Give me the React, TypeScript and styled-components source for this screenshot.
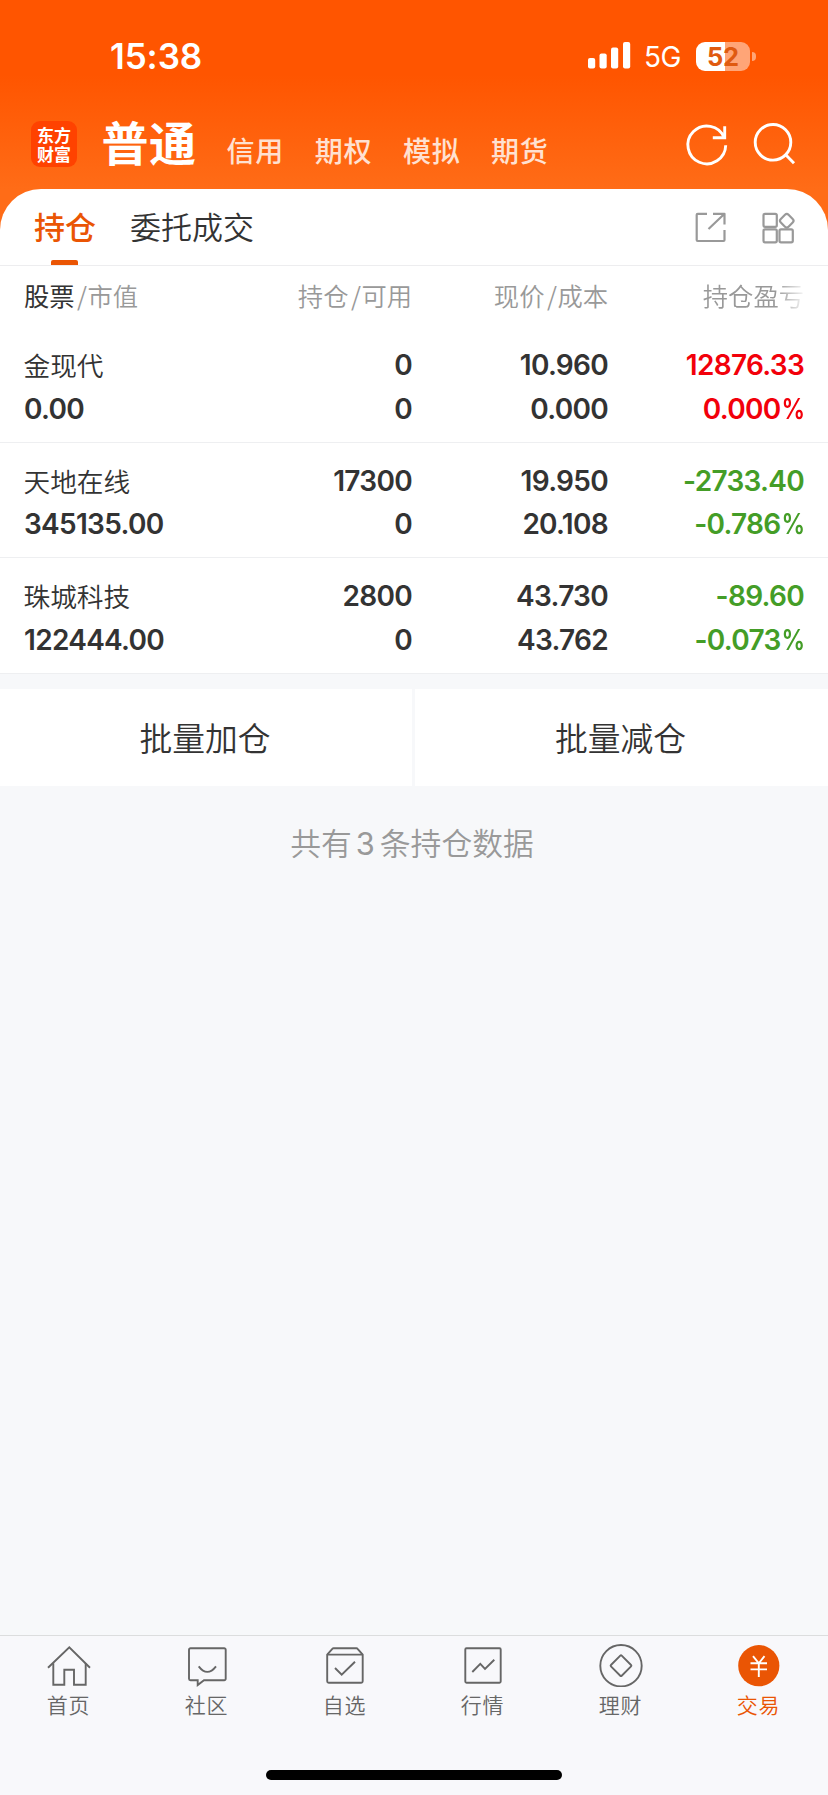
import React from "react";
import styled, { createGlobalStyle } from "styled-components";

const cjk = `"Noto Sans CJK SC", sans-serif`;
const latin = `Inter, "Noto Sans CJK SC", sans-serif`;
const accent = "#ea5504";

const GlobalStyle = createGlobalStyle`
  * { box-sizing: border-box; }
  body { margin: 0; background: #f7f8fa; font-family: ${cjk}; color: #333; }
`;

const Screen = styled.div`
  width: 828px;
  height: 1795px;
  display: flex;
  flex-direction: column;
  overflow: hidden;
  background: #f7f8fa;
`;

const Hero = styled.header`
  height: 189px;
  flex: none;
  background: linear-gradient(#ff5500 0, #ff5500 75px, #ff6c17 189px);
`;

const StatusBar = styled.div`
  height: 112px;
  padding: 0 72px 0 110px;
  display: flex;
  align-items: center;
  justify-content: space-between;
  color: #fff;
  font-family: ${latin};
`;

const Clock = styled.div`
  font-size: 35px;
  font-weight: 600;
  line-height: 40px;
  letter-spacing: -0.1px;
`;

const StatusIcons = styled.div`
  display: flex;
  align-items: center;
  svg { display: block; }
`;

const Network = styled.span`
  width: 65px;
  padding: 2px 0 0 13px;
  font-size: 28px;
  line-height: 32px;
  letter-spacing: -0.5px;
`;

const Battery = styled.div`
  width: 54px;
  height: 29px;
  border-radius: 9px;
  background: linear-gradient(90deg, #fff 28.5px, #ffa577 28.5px);
  color: #e05a10;
  font-size: 25.5px;
  font-weight: 700;
  line-height: 29px;
  text-align: center;
  letter-spacing: -0.3px;
`;

const BatteryTip = styled.div`
  width: 4px;
  height: 9px;
  margin-left: 2px;
  border-radius: 0 4px 4px 0;
  background: #ffa577;
`;

const AccountBar = styled.nav`
  height: 77px;
  padding: 0 29px 0 31px;
  display: flex;
  align-items: flex-start;
`;

const Logo = styled.div`
  width: 46px;
  height: 46px;
  margin-top: 9px;
  padding-top: 4px;
  border-radius: 9px;
  background: #ff4200;
  color: #fff;
  font: 700 17px/19px ${cjk};
  text-align: center;
`;

const AccountCurrent = styled.div`
  width: 95px;
  margin: -1px 30px 0 24.5px;
  font-size: 47px;
  line-height: 60px;
  letter-spacing: 0.5px;
  font-weight: 700;
  color: #fff;
  white-space: nowrap;
`;

const AccountLink = styled.div`
  width: 88.2px;
  margin-top: 18px;
  font-size: 28px;
  line-height: 40px;
  letter-spacing: 0.8px;
  font-weight: 500;
  color: #ffe1d1;
`;

const AccountActions = styled.div`
  display: flex;
  gap: 20px;
  margin: 8px 0 0 auto;
`;

const Sheet = styled.main`
  flex: none;
  background: linear-gradient(#ff6c17, #ff6c17 45px, #fff 45px);
`;

const SheetTabs = styled.div`
  height: 77px;
  padding: 0 34px;
  display: flex;
  border-radius: 41px 41px 0 0;
  border-bottom: 1px solid #ededef;
  background: #fff;
`;

const SheetTab = styled.div<{ $active?: boolean }>`
  position: relative;
  margin-right: 34px;
  font-size: 31px;
  line-height: 73px;
  font-weight: ${(p) => (p.$active ? 500 : 350)};
  color: ${(p) => (p.$active ? accent : "#333")};
  &::after {
    content: "";
    display: ${(p) => (p.$active ? "block" : "none")};
    position: absolute;
    left: 17px;
    bottom: 0;
    width: 27px;
    height: 5px;
    border-radius: 2px 2px 0 0;
    background: ${accent};
  }
`;

const SheetActions = styled.div`
  display: flex;
  gap: 34px;
  margin: 21px -1px 0 auto;
`;

const gridColumns = "224px 164px 196px 196px";

const HeadRow = styled.div`
  height: 61px;
  padding: 0 24px;
  display: grid;
  grid-template-columns: ${gridColumns};
  font-size: 25.3px;
  font-weight: 350;
  line-height: 59px;
  color: #999;
  background: #fff;
`;

const HeadCell = styled.div<{ $left?: boolean; $fade?: boolean }>`
  text-align: ${(p) => (p.$left ? "left" : "right")};
  white-space: nowrap;
  ${(p) => p.$fade && "mask-image: linear-gradient(90deg, #000 168px, rgba(0,0,0,.1) 196px);"}
  b { font-weight: 400; color: #333; }
  i { font-style: normal; margin: 0 0.5px 0 2.5px; }
`;

const Row = styled.div`
  height: 115.7px;
  padding: 17px 24px 0;
  display: grid;
  grid-template-columns: ${gridColumns};
  grid-template-rows: 43.6px 43.6px;
  background: #fff;
  border-bottom: 1px solid #eeeff1;
`;

const Name = styled.div`
  margin-left: -0.5px;
  font-size: 26.7px;
  font-weight: 350;
  line-height: 42px;
`;

const tones = { plain: "#333", up: "#f2000a", down: "#449d27" };

const Figure = styled.div<{ $tone?: keyof typeof tones; $left?: boolean }>`
  font-family: ${latin};
  font-size: 28px;
  font-weight: 600;
  line-height: 43.5px;
  letter-spacing: -0.7px;
  font-feature-settings: "calt" 0;
  text-align: ${(p) => (p.$left ? "left" : "right")};
  color: ${(p) => tones[p.$tone ?? "plain"]};
`;

const Percent = styled.span`
  display: inline-block;
  margin-left: -4px;
  font-weight: 600;
  transform: scaleX(0.84);
  transform-origin: right;
`;

const BatchBar = styled.div`
  flex: none;
  height: 97px;
  margin-top: 15px;
  display: grid;
  grid-template-columns: 412px 413px;
  gap: 3px;
`;

const BatchButton = styled.button`
  border: 0;
  padding: 0 2px 0 0;
  background: #fff;
  color: #333;
  font: 350 32.8px/95px ${cjk};
  display: flex;
  justify-content: center;
`;

const Summary = styled.p`
  flex: 1;
  margin: 33px 0 0;
  padding-right: 4px;
  text-align: center;
  font-size: 30.8px;
  font-weight: 350;
  line-height: 46px;
  color: #999;
  span { font-family: ${latin}; margin: 0 5px 0 4px; font-weight: 400; }
`;

const TabBar = styled.nav`
  flex: none;
  height: 160px;
  border-top: 1px solid #dcddde;
  background: #f8f8fb;
`;

const TabList = styled.div`
  display: grid;
  grid-template-columns: repeat(6, 1fr);
  height: 134px;
`;

const TabItem = styled.div<{ $active?: boolean }>`
  display: flex;
  flex-direction: column;
  align-items: center;
  padding-top: 7px;
  font-size: 21px;
  font-weight: 350;
  line-height: 30px;
  letter-spacing: 0.7px;
  color: ${(p) => (p.$active ? accent : "#666")};
  svg { display: block; margin-bottom: 2px; }
  span { margin-right: 1px; }
`;

const HomeIndicator = styled.div`
  width: 296px;
  height: 10px;
  margin: 0 auto;
  border-radius: 5px;
  background: #000;
`;

const SignalIcon = () => (
  <svg width="43" height="28" viewBox="0 0 43 28" fill="#fff">
    <rect x="0" y="16" width="7.2" height="10.5" rx="2" />
    <rect x="11.5" y="11.5" width="7.2" height="15" rx="2" />
    <rect x="23" y="5.5" width="7.2" height="21" rx="2" />
    <rect x="35" y="0" width="7.2" height="26.5" rx="2" />
  </svg>
);

const RefreshIcon = () => (
  <svg width="48" height="48" viewBox="0 0 48 48" fill="none" stroke="#fff" strokeWidth="2.9">
    <path d="M42.7 25.3A18.9 18.9 0 1 1 41.2 17.5" />
    <path d="M41.7 6.3V17.7H29.8" />
  </svg>
);

const SearchIcon = () => (
  <svg width="48" height="48" viewBox="0 0 48 48" fill="none" stroke="#fff" strokeWidth="2.9">
    <circle cx="22" cy="22.3" r="17.8" />
    <path d="M34.5 34.5L43 43.2" />
  </svg>
);

const OpenIcon = () => (
  <svg width="34" height="34" viewBox="0 0 34 34" fill="none" stroke="#999" strokeWidth="2.2" strokeLinejoin="round">
    <path d="M14 3.8H4.7a1 1 0 0 0-1 1V30a1 1 0 0 0 1 1H30.5a1 1 0 0 0 1-1V20" />
    <path d="M20 3.8H31.5V14.5M31.5 3.8L15.5 19" />
  </svg>
);

const AppsIcon = () => (
  <svg width="34" height="34" viewBox="0 0 34 34" fill="none" stroke="#999" strokeWidth="2.2">
    <rect x="2.5" y="3.8" width="13.3" height="13" rx="1.5" />
    <rect x="2.5" y="19.3" width="13.3" height="13" rx="1.5" />
    <rect x="18.5" y="19.3" width="13.3" height="13" rx="1.5" />
    <rect x="20.3" y="5.3" width="10.9" height="10.9" rx="2.5" transform="rotate(45 25.75 10.75)" />
  </svg>
);

const tabIcons = {
  home: (
    <>
      <path d="M1 24.7L22.3 4.3L43 24.7" />
      <path d="M6.3 20.3V41.7H17.3V26.7H27V41.7H38.7V20.3" />
    </>
  ),
  community: (
    <>
      <path d="M5.5 5.3H39.2a1.5 1.5 0 0 1 1.5 1.5V35.8a1.5 1.5 0 0 1-1.5 1.5H19L12.7 42.1V37.3H5.5a1.5 1.5 0 0 1-1.5-1.5V6.8a1.5 1.5 0 0 1 1.5-1.5Z" />
      <path d="M13.7 23.3Q22.3 34.5 31 23.3" />
    </>
  ),
  watchlist: (
    <>
      <path d="M4.2 11.6V38.2a1.5 1.5 0 0 0 1.5 1.5H38.2a1.5 1.5 0 0 0 1.5-1.5V11.6L34.6 5.8Q34.2 5.3 33.5 5.3H10.5Q9.8 5.3 9.3 5.8Z" />
      <path d="M4.2 11.6H39.7M12 25L18.7 31.7L32 18.7" />
    </>
  ),
  market: (
    <>
      <rect x="4.3" y="5.3" width="35.4" height="34.4" rx="1.2" />
      <path d="M11.3 29L19.3 20.9L24 25.9L33.3 16.7" />
    </>
  ),
  wealth: (
    <>
      <circle cx="22" cy="22.7" r="20.7" />
      <rect x="14.4" y="15.1" width="15.2" height="15.2" rx="1" transform="rotate(45 22 22.7)" />
    </>
  ),
  trade: (
    <>
      <circle cx="21.8" cy="22.7" r="20.6" fill={accent} stroke="none" />
      <path stroke="#fff" d="M16 13.2L21.8 20.3L27.5 13.2M21.8 20.3V34M13.5 20.3H30M13.5 26.4H30" />
    </>
  ),
};

const tabs: { icon: keyof typeof tabIcons; label: string }[] = [
  { icon: "home", label: "首页" },
  { icon: "community", label: "社区" },
  { icon: "watchlist", label: "自选" },
  { icon: "market", label: "行情" },
  { icon: "wealth", label: "理财" },
  { icon: "trade", label: "交易" },
];

const holdings: {
  name: string; value: string; held: string; usable: string;
  price: string; cost: string; profit: string; rate: string; tone: "up" | "down";
}[] = [
  { name: "金现代", value: "0.00", held: "0", usable: "0", price: "10.960", cost: "0.000", profit: "12876.33", rate: "0.000", tone: "up" },
  { name: "天地在线", value: "345135.00", held: "17300", usable: "0", price: "19.950", cost: "20.108", profit: "-2733.40", rate: "-0.786", tone: "down" },
  { name: "珠城科技", value: "122444.00", held: "2800", usable: "0", price: "43.730", cost: "43.762", profit: "-89.60", rate: "-0.073", tone: "down" },
];

export default function App() {
  return (
    <Screen>
      <GlobalStyle />
      <Hero>
        <StatusBar>
          <Clock>15:38</Clock>
          <StatusIcons>
            <SignalIcon />
            <Network>5G</Network>
            <Battery>52</Battery>
            <BatteryTip />
          </StatusIcons>
        </StatusBar>
        <AccountBar>
          <Logo>东方<br />财富</Logo>
          <AccountCurrent>普通</AccountCurrent>
          {["信用", "期权", "模拟", "期货"].map((label) => (
            <AccountLink key={label}>{label}</AccountLink>
          ))}
          <AccountActions>
            <RefreshIcon />
            <SearchIcon />
          </AccountActions>
        </AccountBar>
      </Hero>
      <Sheet>
        <SheetTabs>
          <SheetTab $active>持仓</SheetTab>
          <SheetTab>委托成交</SheetTab>
          <SheetActions>
            <OpenIcon />
            <AppsIcon />
          </SheetActions>
        </SheetTabs>
        <HeadRow>
          <HeadCell $left><b>股票</b><i>/</i>市值</HeadCell>
          <HeadCell>持仓<i>/</i>可用</HeadCell>
          <HeadCell>现价<i>/</i>成本</HeadCell>
          <HeadCell $fade>持仓盈亏</HeadCell>
        </HeadRow>
        {holdings.map((h) => (
          <Row key={h.name}>
            <Name>{h.name}</Name>
            <Figure>{h.held}</Figure>
            <Figure>{h.price}</Figure>
            <Figure $tone={h.tone}>{h.profit}</Figure>
            <Figure $left>{h.value}</Figure>
            <Figure>{h.usable}</Figure>
            <Figure>{h.cost}</Figure>
            <Figure $tone={h.tone}>{h.rate}<Percent>%</Percent></Figure>
          </Row>
        ))}
      </Sheet>
      <BatchBar>
        <BatchButton>批量加仓</BatchButton>
        <BatchButton>批量减仓</BatchButton>
      </BatchBar>
      <Summary>共有<span>3</span>条持仓数据</Summary>
      <TabBar>
        <TabList>
          {tabs.map((t) => (
            <TabItem key={t.icon} $active={t.icon === "trade"}>
              <svg width="44" height="44" viewBox="0 0 44 44" fill="none" stroke="#666" strokeWidth="1.9">
                {tabIcons[t.icon]}
              </svg>
              <span>{t.label}</span>
            </TabItem>
          ))}
        </TabList>
        <HomeIndicator />
      </TabBar>
    </Screen>
  );
}
